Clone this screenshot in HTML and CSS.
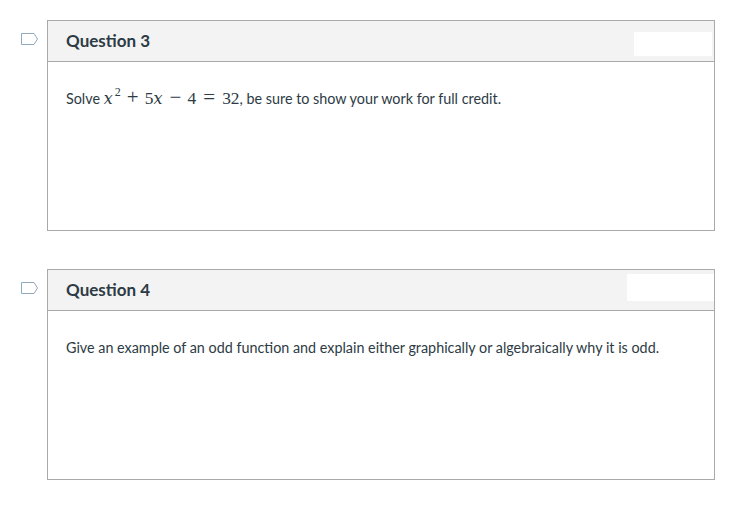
FILE: index.html
```html
<!DOCTYPE html>
<html>
<head>
<meta charset="utf-8">
<link rel="stylesheet" href="styles.css">
</head>
<body>
<div class="page">
  <div class="question q3">
    <div class="flag">
      <svg width="19" height="14" viewBox="0 0 19 14"><path d="M1.5 1.5 H14 L17.5 7 L14 12.5 H1.5 Z" fill="none" stroke="#8fa9bf" stroke-width="1"/></svg>
    </div>
    <div class="card">
      <div class="card-header">
        <h2 class="title">Question 3</h2>
        <div class="points points-3"></div>
      </div>
      <div class="card-body">
        <p class="text">Solve <span class="math"><i class="mv">x</i><sup class="sup">2</sup><span class="op bin">+</span>5<i class="mv">x</i><span class="op bin">−</span>4<span class="op rel">=</span>32</span>, be sure to show your work for full credit.</p>
      </div>
    </div>
  </div>
  <div class="question q4">
    <div class="flag">
      <svg width="19" height="14" viewBox="0 0 19 14"><path d="M1.5 1.5 H14 L17.5 7 L14 12.5 H1.5 Z" fill="none" stroke="#8fa9bf" stroke-width="1"/></svg>
    </div>
    <div class="card">
      <div class="card-header">
        <h2 class="title">Question 4</h2>
        <div class="points points-4"></div>
      </div>
      <div class="card-body">
        <p class="text">Give an example of an odd function and explain either graphically or algebraically why it is odd.</p>
      </div>
    </div>
  </div>
</div>
</body>
</html>
```
FILE: styles.css
```css
html, body {
  margin: 0;
  padding: 0;
  background: #ffffff;
}
body {
  font-family: Lato, "Open Sans", "Liberation Sans", sans-serif;
  color: #2d3b45;
}
.page {
  padding-top: 20px;
  display: flex;
  flex-direction: column;
  gap: 38px;
}
.question {
  display: flex;
}
.flag {
  width: 47px;
  flex: 0 0 47px;
  display: flex;
  justify-content: flex-start;
  padding-left: 20px;
  padding-top: 12px;
  box-sizing: border-box;
}
.flag svg {
  display: block;
}
.card {
  width: 668px;
  box-sizing: border-box;
  border: 1px solid #a9a9a9;
}
.card-header {
  height: 40px;
  background: #f3f3f3;
  border-bottom: 1px solid #a9a9a9;
  display: flex;
  align-items: flex-start;
  padding-left: 18px;
}
.title {
  margin: 0;
  font-size: 17px;
  font-weight: 700;
  line-height: 19px;
  padding-top: 10px;
}
.points {
  margin-left: auto;
  background: #ffffff;
}
.points-3 {
  width: 78px;
  height: 24px;
  margin-top: 11px;
  margin-right: 2px;
}
.points-4 {
  width: 87px;
  height: 27px;
  margin-top: 4px;
}
.card-body {
  height: 168px;
  padding: 26px 18px 0 18px;
  box-sizing: border-box;
}
.text {
  margin: 0;
  font-size: 14.35px;
  line-height: 21px;
}
.math {
  font-family: "Liberation Serif", "DejaVu Serif", serif;
  font-size: 17.4px;
  line-height: 14px;
}
.mv {
  font-family: "DejaVu Serif", "Liberation Serif", serif;
  font-style: italic;
  font-size: 16px;
  padding-right: 1px;
}
.sup {
  font-size: 12px;
  line-height: 0;
  vertical-align: 8px;
  margin-left: 1px;
}
.op {
  display: inline-block;
  text-align: center;
  font-size: 21px;
  line-height: 14px;
}
.bin {
  width: 24px;
}
.rel {
  width: 26px;
}
```
